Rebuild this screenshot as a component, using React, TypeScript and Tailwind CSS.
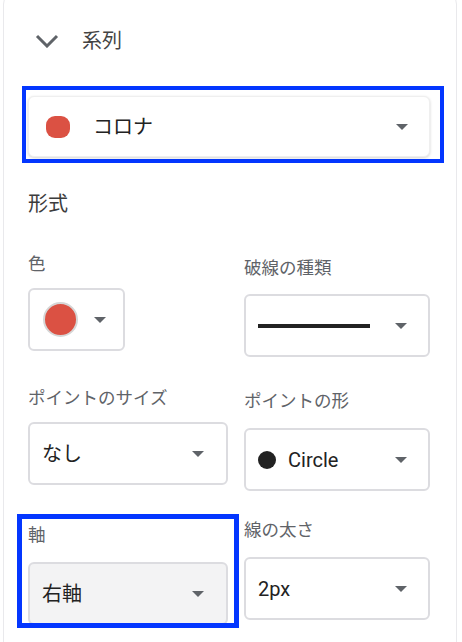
import type { ReactNode } from 'react'

const FONT = "font-['Roboto','Noto_Sans_CJK_JP',sans-serif]"

function Caret() {
  return (
    <svg width="12" height="6" viewBox="0 0 12 6" className="shrink-0">
      <path d="M0 0 L12 0 L6 6 Z" fill="#5f6368" />
    </svg>
  )
}

function Label({ children }: { children: ReactNode }) {
  return <p className="h-[24px] text-[17.5px] leading-[24px] text-[#5f6368] whitespace-nowrap">{children}</p>
}

function Select({ children, className = '' }: { children: ReactNode; className?: string }) {
  return (
    <div className={`flex h-[63px] items-center justify-between rounded-[6px] border-2 border-[#dcdce0] bg-white pl-[12px] pr-[21px] ${className}`}>
      {children}
    </div>
  )
}

export default function App() {
  return (
    <div className={`h-[642px] overflow-hidden bg-white ${FONT}`}>
      <div className="mt-[-8px] ml-[3px] mr-[5px] rounded-[12px] border border-[#e9e9ec] pb-[60px]">
        {/* header */}
        <div className="mt-[34px] flex h-[28px] items-center pl-[31px]">
          <svg width="24" height="14" viewBox="0 0 24 14">
            <path d="M2 2 L12 12 L22 2" fill="none" stroke="#5f6368" strokeWidth="3" />
          </svg>
          <span className="ml-[23px] text-[20px] leading-[28px] text-[#444]">系列</span>
        </div>

        {/* series picker */}
        <div className="mt-[31px] ml-[18px] w-[422px] border-4 border-[#0336ff] pt-[6px] pl-[2px] pr-[10px] pb-[2px]">
          <div className="flex h-[61px] items-center justify-between rounded-[6px] border border-[#efefef] bg-white pl-[17px] pr-[21px] shadow-[0_1px_3px_rgba(0,0,0,0.18)]">
            <div className="flex items-center">
              <span className="h-[22px] w-[24px] rounded-[9px] bg-[#db5143]" />
              <span className="ml-[23px] text-[20px] leading-[28px] text-[#222]">コロナ</span>
            </div>
            <Caret />
          </div>
        </div>

        <p className="mt-[27px] ml-[24px] text-[20px] leading-[28px] text-[#3c3c3c]">形式</p>

        <div className="flex pl-[24px]">
          {/* left column */}
          <div className="flex w-[200px] flex-col">
            <div className="mt-[34px]">
              <Label>色</Label>
              <div className="mt-[12px] flex h-[63px] w-[97px] items-center rounded-[6px] border-2 border-[#dcdce0] pl-[13px]">
                <span className="h-[35px] w-[35px] rounded-full border-2 border-[#d6d6d6] bg-[#db5143]" />
                <span className="ml-[16px]"><Caret /></span>
              </div>
            </div>
            <div className="mt-[35px]">
              <Label>ポイントのサイズ</Label>
              <Select className="mt-[12px] w-[200px] pr-[22px]">
                <span className="text-[20px] leading-[28px] text-[#222]">なし</span>
                <Caret />
              </Select>
            </div>
            <div className="mt-[29px] -ml-[11px] h-[114px] w-[222px] overflow-hidden border-[5px] border-[#0336ff] px-[6px] pt-[4px]">
              <Label>軸</Label>
              <div className="mt-[15px] flex h-[63px] items-center justify-between rounded-[6px] border-2 border-[#dcdce0] bg-[#f3f3f4] pl-[12px] pr-[22px]">
                <span className="text-[20px] leading-[28px] text-[#222]">右軸</span>
                <Caret />
              </div>
            </div>
          </div>

          {/* right column */}
          <div className="ml-[16px] flex w-[186px] flex-col">
            <div className="mt-[38px]">
              <Label>破線の種類</Label>
              <Select className="mt-[14px]">
                <span className="h-[4px] w-[112px] bg-[#222]" />
                <Caret />
              </Select>
            </div>
            <div className="mt-[32px]">
              <Label>ポイントの形</Label>
              <Select className="mt-[15px]">
                <div className="flex items-center">
                  <span className="h-[18px] w-[18px] rounded-full bg-[#222]" />
                  <span className="ml-[12px] text-[20px] leading-[28px] text-[#222]">Circle</span>
                </div>
                <Caret />
              </Select>
            </div>
            <div className="mt-[27px]">
              <Label>線の太さ</Label>
              <Select className="mt-[15px]">
                <span className="text-[20px] leading-[28px] text-[#222]">2px</span>
                <Caret />
              </Select>
            </div>
          </div>
        </div>
      </div>
    </div>
  )
}
